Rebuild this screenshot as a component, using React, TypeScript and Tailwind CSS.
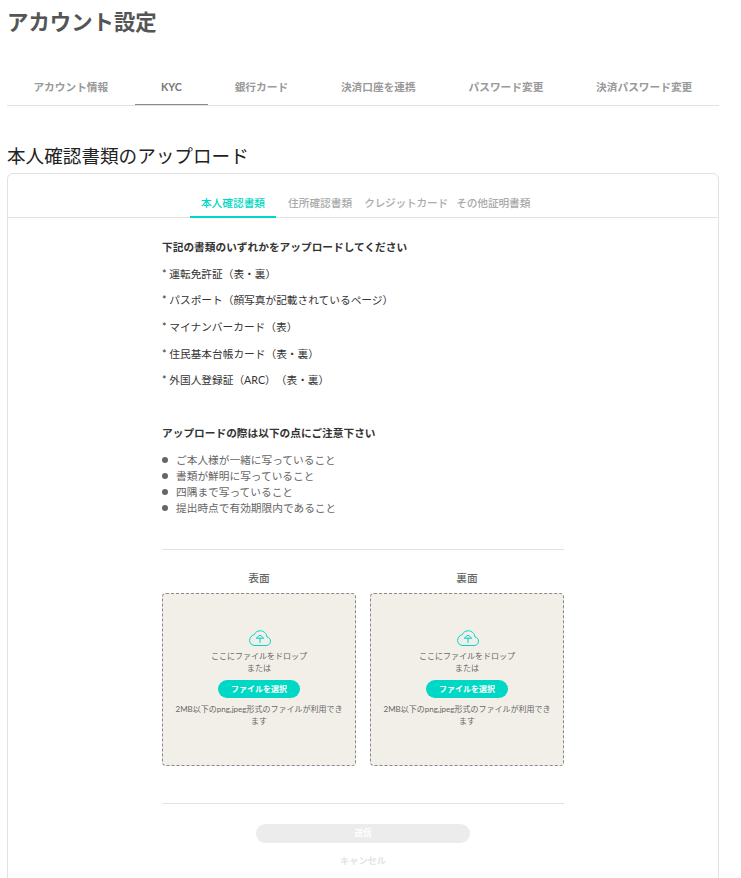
import React from 'react';

const mainTabs = ['アカウント情報', 'KYC', '銀行カード', '決済口座を連携', 'パスワード変更', '決済パスワード変更'];
const docs = ['* 運転免許証（表・裏）', '* パスポート（顔写真が記載されているページ）', '* マイナンバーカード（表）', '* 住民基本台帳カード（表・裏）', '* 外国人登録証（ARC）（表・裏）'];
const notes = ['ご本人様が一緒に写っていること', '書類が鮮明に写っていること', '四隅まで写っていること', '提出時点で有効期限内であること'];

const CloudIcon = () => (
    <svg className="ml-[1px]" width="22" height="16" viewBox="0 0 22 16" fill="none" stroke="#00d7c4" strokeWidth="1" strokeLinejoin="round" strokeLinecap="round">
        <path d="M5.5 15.5 H17 C19.6 15.5 21.5 13.6 21.5 11.2 C21.5 9 20 7.4 18 7 C17.6 3.4 14.8 0.8 11.2 0.8 C8.4 0.8 6.2 2.4 5.2 4.8 C2.6 5.2 0.6 7.6 0.6 10.4 C0.6 13.2 2.8 15.5 5.5 15.5 Z" />
        <path d="M7.5 8 L11 5 L14.5 8 Z" />
        <path d="M11 8 V12.5" />
    </svg>
);

const UploadBox = ({ label }: { label: string }) => (
    <div className="w-[194px]">
        <p className="text-center text-[10.7px] leading-[16px] text-[#666] font-medium mb-[7px]">{label}</p>
        <div className="h-[173px] bg-[#f2efe9] border border-dashed border-[#8a8a8a] rounded-[4px] flex flex-col items-center pt-[36px] px-[9px]">
            <CloudIcon />
            <p className="mt-[5px] text-center text-[8px] leading-[11.5px] text-[#666]">ここにファイルをドロップ<br />または</p>
            <button className="mt-[6px] w-[82px] h-[18px] rounded-full bg-[#00d7c4] text-white text-[8px] font-bold leading-none">ファイルを選択</button>
            <p className="mt-[5px] text-center text-[8px] leading-[12px] text-[#666]">2MB以下のpng,jpeg形式のファイルが利用できます</p>
        </div>
    </div>
);

export default function App() {
    return (
        <div className="h-[878px] overflow-hidden bg-white pl-[7px] pr-[22px] font-['Lato','Noto_Sans_CJK_JP',sans-serif] [text-spacing-trim:space-all]">
            <h1 className="pt-[6px] text-[21.4px] leading-[32px] font-bold text-[#555]">アカウント設定</h1>

            <div className="mt-[30px] flex border-b border-[#e4dfe0] whitespace-nowrap">
                {mainTabs.map((tab, i) => (
                    <div
                        key={tab}
                        className={i === 1
                            ? "px-[26.4px] h-[37px] pt-[2px] -mb-px flex items-center border-b border-[#8b8b8b] text-[10.7px] font-bold text-[#777]"
                            : "px-[26.4px] h-[37px] pt-[1px] flex items-center text-[10.7px] font-bold text-[#999]"}
                    >
                        {tab}
                    </div>
                ))}
            </div>

            <h2 className="mt-[36px] text-[18.6px] leading-[28px] text-[#222]">本人確認書類のアップロード</h2>

            <div className="mt-[3px] border border-[#e2e2e2] rounded-[6px] pb-10">
                <div className="h-[44px] flex items-end pl-[182px] border-b border-[#e2e2e2] text-[10.7px] font-medium text-[#aaa] whitespace-nowrap">
                    <div className="w-[86px] h-[27px] -mb-px text-center leading-[24px] text-[#00d7c4] border-b-2 border-[#00d7c4]">本人確認書類</div>
                    <div className="ml-[12px] h-[26px] leading-[24px]">住所確認書類</div>
                    <div className="ml-[12px] w-[84px] h-[26px] leading-[24px] tracking-[-0.2px]">クレジットカード</div>
                    <div className="ml-[8px] h-[26px] leading-[24px] tracking-[-0.1px]">その他証明書類</div>
                </div>

                <div className="w-[402px] ml-[154px] pt-[21px]">
                    <p className="text-[10.7px] leading-[16px] font-bold text-[#333]">下記の書類のいずれかをアップロードしてください</p>
                    <ul className="mt-[10.7px] flex flex-col gap-[10.7px] text-[10.7px] leading-[16px] text-[#333]">
                        {docs.map(d => <li key={d}>{d}</li>)}
                    </ul>

                    <p className="mt-[37px] text-[10.7px] leading-[16px] font-bold text-[#333]">アップロードの際は以下の点にご注意下さい</p>
                    <ul className="mt-[11px] text-[10.7px] leading-[16px] text-[#666]">
                        {notes.map(n => (
                            <li key={n} className="flex items-center gap-[8px]">
                                <span className="w-[6px] h-[6px] rounded-full bg-[#666]" />
                                {n}
                            </li>
                        ))}
                    </ul>

                    <div className="mt-[33px] border-t border-[#e2e2e2]" />

                    <div className="mt-[20px] flex justify-between">
                        <UploadBox label="表面" />
                        <UploadBox label="裏面" />
                    </div>

                    <div className="mt-[37px] border-t border-[#e2e2e2]" />

                    <div className="mt-[20px] flex flex-col items-center">
                        <button className="w-[214px] h-[19px] rounded-full bg-[#ececec] text-white text-[8.9px] font-bold leading-none">送信</button>
                        <p className="mt-[11px] text-[9.2px] leading-[14px] font-bold text-[#e4e4e4]">キャンセル</p>
                    </div>
                </div>
            </div>
        </div>
    );
}
